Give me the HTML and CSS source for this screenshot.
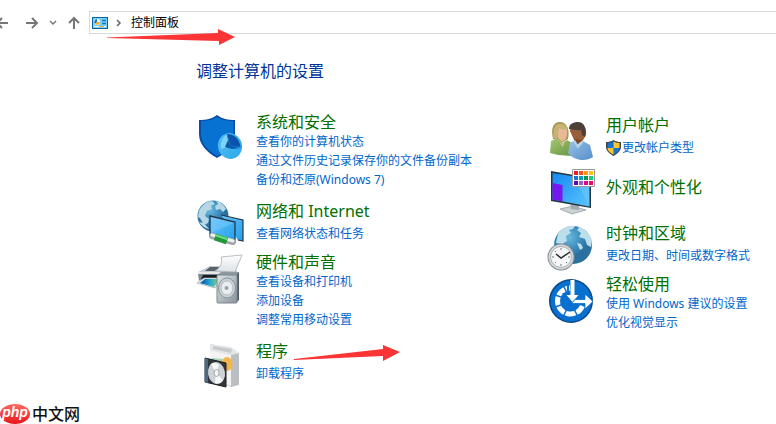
FILE: index.html
```html
<!DOCTYPE html>
<html lang="zh-CN">
<head>
    <meta charset="UTF-8">
    <meta name="viewport" content="width=device-width, initial-scale=1.0">
    <title>控制面板</title>
    <link rel="stylesheet" href="styles.css">
</head>
<body>
    <header class="toolbar">
        <nav class="nav-buttons">
            <button class="nav-btn back" aria-label="后退">
                <svg width="14" height="14" viewBox="0 0 14 14"><path d="M13 7H2M7 2L2 7l5 5"/></svg>
            </button>
            <button class="nav-btn forward" aria-label="前进">
                <svg width="14" height="14" viewBox="0 0 14 14"><path d="M1 7h11M7 2l5 5-5 5"/></svg>
            </button>
            <button class="nav-btn recent" aria-label="最近位置">
                <svg width="8" height="8" viewBox="0 0 8 8"><path d="M1 2l3 3 3-3"/></svg>
            </button>
            <button class="nav-btn up" aria-label="向上">
                <svg width="14" height="14" viewBox="0 0 14 14"><path d="M7 13V2M2 7l5-5 5 5"/></svg>
            </button>
        </nav>
        <div class="address-bar">
            <svg width="16" height="12" viewBox="0 0 16 12">
                <rect width="16" height="12" fill="#0b66a5"/>
                <rect x="1" y="1" width="14" height="10" fill="#79d0fb"/>
                <circle cx="5" cy="5" r="3" fill="#fff"/>
                <path d="M5 5V2a3 3 0 0 0-2 5z" fill="#1475c4"/>
                <path d="M5 5l-2 2a3 3 0 0 0 5-2z" fill="#f6ae24"/>
                <path d="M10 3.500h4M10 6.500h4" stroke="#1475c4" stroke-width="1.500"/>
                <path d="M2 9.500h6M12 9.500h2" stroke="#fff"/>
                <path d="M7 9.500h5" stroke="#f6ae24"/>
            </svg>
            <svg class="crumb-arrow" width="6" height="8" viewBox="0 0 6 8"><path d="M1 1l3 3-3 3"/></svg>
            <a href="#" class="crumb">控制面板</a>
        </div>
    </header>

    <main class="content">
        <h1>调整计算机的设置</h1>
        <div class="columns">
            <div class="column">
                <section class="category tall">
                    <svg class="icon" viewBox="0 0 48 48">
                        <defs>
                            <linearGradient id="pie" x2="1" y2="1"><stop stop-color="#55bdf0"/><stop offset="1" stop-color="#28a8ea"/></linearGradient>
                        </defs>
                        <path d="M21 1c5 4 11 5 18 5v14c0 11-9 19-18 24C12 39 3 31 3 20V6c7 0 13-1 18-5z" fill="#0a4ba5"/>
                        <path d="M21 3c5 3 10 4 16.500 4v13c0 10-8 17-16.500 22C12.500 37 5 30 5 20V7c6 0 11-1 16-4z" fill="#0872d3"/>
                        <ellipse cx="34" cy="32" rx="12" ry="13" transform="rotate(-18 34 32)" fill="url(#pie)"/>
                        <path d="M34 32l-3-12c7 0 12 4 13.500 13z" fill="#0c54aa"/>
                        <path d="M34 32l-9 3c-1-6 1-11 6-15z" fill="#7ed2f7"/>
                        <path d="M31 20l3 12 10.500 1" fill="none" stroke="#1270cb"/>
                        <path d="M29 33l3-7 2 6 10 2-8 1z" fill="#0757ab"/>
                    </svg>
                    <div class="category-text">
                        <h2><a href="#">系统和安全</a></h2>
                        <a href="#">查看你的计算机状态</a>
                        <a href="#">通过文件历史记录保存你的文件备份副本</a>
                        <a href="#">备份和还原(Windows 7)</a>
                    </div>
                </section>

                <section class="category">
                    <svg class="icon" viewBox="0 0 48 48">
                        <defs>
                            <radialGradient id="globe" cx=".4" cy=".3"><stop stop-color="#6ab9df"/><stop offset=".7" stop-color="#3788b9"/><stop offset="1" stop-color="#2b719f"/></radialGradient>
                            <linearGradient id="screen" x2="1" y2="1"><stop stop-color="#69c5ff"/><stop offset="1" stop-color="#239ee9"/></linearGradient>
                        </defs>
                        <circle cx="17" cy="18" r="15.500" fill="url(#globe)"/>
                        <path d="M3 13C6 7 11 3 16 3l3 3-4 2 1 3-5 2-2 5 4 3-1 4-4 2-4-7-2-1zM20 3c5 1 8 4 10 8l-3 3-3-3-4 1-1-4 3-2zM3 24l5 1 5 6c-5-1-8-4-10-7z" fill="#b6d8e6"/>
                        <path d="M25 17l22 5v21l-5-1" fill="url(#screen)" stroke="#263744" stroke-width="1.200"/>
                        <path d="M14 18l25 6v20l-25-7z" fill="url(#screen)" stroke="#263744" stroke-width="1.300"/>
                        <path d="M15 19l23 6-23 10z" fill="#9adcff" opacity=".3"/>
                        <path d="M16 38l21 6" stroke="#9ca4a8" stroke-width="6" stroke-linecap="round"/>
                        <path d="M16 37l21 6" stroke="#edf0ee" stroke-width="3" stroke-linecap="round"/>
                        <path d="M19 39l12 4" stroke="#229739" stroke-width="7"/>
                        <path d="M19 37l12 4" stroke="#6de17d" stroke-width="2"/>
                    </svg>
                    <div class="category-text">
                        <h2><a href="#">网络和 Internet</a></h2>
                        <a href="#">查看网络状态和任务</a>
                    </div>
                </section>

                <section class="category tall">
                    <svg class="icon" viewBox="0 0 48 48">
                        <defs>
                            <linearGradient id="metal" x2="1" y2="1"><stop stop-color="#dfe5e8"/><stop offset="1" stop-color="#87939a"/></linearGradient>
                            <linearGradient id="photo"><stop stop-color="#0646a5"/><stop offset=".5" stop-color="#23abd2"/><stop offset="1" stop-color="#9ed26e"/></linearGradient>
                            <linearGradient id="paper" x2="0" y2="1"><stop stop-color="#fff"/><stop offset="1" stop-color="#dbe1e5"/></linearGradient>
                        </defs>
                        <path d="M2 18l12-6h24l4 7-10 9H3z" fill="#c6cdd2"/>
                        <path d="M14 13h23l-4 4H9z" fill="#596269"/>
                        <path d="M25 3l21-2-7 17-20-1c5-3 8-8 6-14z" fill="url(#paper)" stroke="#a9b0b5" stroke-width=".8"/>
                        <path d="M2 18h29v10l-28-2z" fill="#7b858c"/>
                        <path d="M2 18h29v2H2z" fill="#e3e8eb"/>
                        <path d="M7 21h22l-3 4H5z" fill="#171e22"/>
                        <path d="M8 24h18l-7 10L1 29z" fill="#e7edf0" stroke="#9ca6ac" stroke-width=".7"/>
                        <path d="M9 25h15l-6 8-14-4z" fill="url(#photo)"/>
                        <path d="M21 21l4-3h18l-2 4z" fill="#8e999f"/>
                        <path d="M40 22l3-4v28l-3 3z" fill="#4e595f"/>
                        <rect x="21" y="21" width="20" height="28" rx="1" fill="url(#metal)" stroke="#7d878d"/>
                        <ellipse cx="31" cy="34" rx="8.500" ry="10" fill="#cbd2d6" stroke="#8a9499"/>
                        <ellipse cx="31" cy="34" rx="6" ry="7" fill="#e9edef" stroke="#b4bbbf"/>
                        <circle cx="30.500" cy="34" r="2" fill="#9ba4a9"/>
                    </svg>
                    <div class="category-text">
                        <h2><a href="#">硬件和声音</a></h2>
                        <a href="#">查看设备和打印机</a>
                        <a href="#">添加设备</a>
                        <a href="#">调整常用移动设置</a>
                    </div>
                </section>

                <section class="category">
                    <svg class="icon" viewBox="0 0 48 48">
                        <path d="M14 6l20 4 9 6v31l-8 2-21-9z" fill="#c5c9cb"/>
                        <path d="M14 12l21 5v31l-21-7z" fill="#f2f3f2"/>
                        <path d="M35 17l8-2v31l-8 3z" fill="#bbbfc2"/>
                        <path d="M14 6l21 3 8 6-8 2-21-5z" fill="#e4e7e8"/>
                        <path d="M17 8l19 3-1 4-18-4z" fill="#c6cacc"/>
                        <path d="M16 20l11 1-3 7 5 8-5 8-8-3z" fill="#a8d4b4"/>
                        <ellipse cx="31" cy="26" rx="5.500" ry="7" fill="#f6b44d"/>
                        <path d="M9 20l21 5v24L9 44z" fill="#30363b" stroke="#1c2023"/>
                        <path d="M9 20l3 1v24l-3-1z" fill="#4d6988"/>
                        <ellipse cx="20.500" cy="35" rx="8.500" ry="11" transform="rotate(-10 20.500 35)" fill="#ced3d5"/>
                        <path d="M20 35l-5-9c3-2 6-1 8 1zM20 35l7 7c-2 4-5 4-8 3z" fill="#f8f9f9"/>
                        <ellipse cx="20.500" cy="35" rx="2.500" ry="3.500" fill="#f6f7f7" stroke="#a0a8ad"/>
                    </svg>
                    <div class="category-text">
                        <h2><a href="#">程序</a></h2>
                        <a href="#">卸载程序</a>
                    </div>
                </section>
            </div>

            <div class="column">
                <section class="category">
                    <svg class="icon" viewBox="0 0 48 48">
                        <defs>
                            <linearGradient id="green" x2="1" y2="1"><stop stop-color="#a4c773"/><stop offset="1" stop-color="#66933e"/></linearGradient>
                            <linearGradient id="blue" x2="1" y2="1"><stop stop-color="#9ac1e8"/><stop offset="1" stop-color="#568fc9"/></linearGradient>
                        </defs>
                        <path d="M7 27C5 18 6 10 14 10c7 0 10 8 8 17l-5 3z" fill="#aa9652"/>
                        <path d="M12 15c5-3 10 0 9 6 0 5-2 8-5 8-4 0-6-6-4-14z" fill="#e9b993"/>
                        <path d="M8 17c2-8 12-6 14 0-5 1-7 0-9-1l-2 11-4-1z" fill="#c5b374"/>
                        <path d="M4 41l1-12 7-3 5 5 4-3 8 5-3 11-14-1z" fill="url(#green)"/>
                        <path d="M11 27l5 5 3-4-2 7z" fill="#e9b993"/>
                        <path d="M24 19c0-7 4-8 8-8 5 0 9 4 8 12l-4 7h-7z" fill="#985f3a"/>
                        <path d="M23 17c0-5 4-7 9-7 6 0 9 6 7 15l-3-2-1-5c-5 1-8-1-12-1z" fill="#4d4039"/>
                        <path d="M28 27l3 6 6-5z" fill="#804923"/>
                        <path d="M22 41l2-10 5-3 3 5 5-4 7 4 3 12c-7 5-19 4-25-4z" fill="url(#blue)"/>
                        <path d="M28 29l4 6 5-6" fill="none" stroke="#b5d3ef" stroke-width="2"/>
                    </svg>
                    <div class="category-text">
                        <h2><a href="#">用户帐户</a></h2>
                        <a href="#" class="shield-link">
                            <svg width="15" height="16" viewBox="0 0 15 16">
                                <path d="M7.500 0C10 1.500 12 2 15 2v5c0 4-4 7-7.500 9C4 14 0 11 0 7V2c3 0 5-.5 7.500-2z" fill="#3c464d"/>
                                <path d="M7.500 1.500V8h-6V3c2 0 4-.5 6-1.500zM7.500 8h6c0 3-3 5-6 6.500z" fill="#1675d0"/>
                                <path d="M7.500 1.500V8h6V3c-2 0-4-.5-6-1.500zM7.500 8h-6c0 3 3 5 6 6.500z" fill="#fdc52c"/>
                            </svg>
                            更改帐户类型</a>
                    </div>
                </section>

                <section class="category title-only">
                    <svg class="icon" viewBox="0 0 48 48">
                        <defs>
                            <linearGradient id="desktop" x2="1" y2="1"><stop stop-color="#1489f0"/><stop offset="1" stop-color="#5cc5ff"/></linearGradient>
                        </defs>
                        <path d="M14 43l13-3 13 4-14 4z" fill="#cbd0d3" stroke="#8e969b" stroke-width=".7"/>
                        <path d="M24 36h9v8l-8-1z" fill="#a2aab0"/>
                        <path d="M5 5l40 7v30L5 35z" fill="#253640"/>
                        <path d="M6.500 7L43.500 13v27.500L6.500 33.500z" fill="url(#desktop)"/>
                        <path d="M6.500 17l10 2v16.500l-10-2z" fill="#7717ef"/>
                        <path d="M26 10l17 3v25z" fill="#8ad7ff" opacity=".35"/>
                        <path d="M26.500 3.500h22v17h-22z" fill="#fff" stroke="#9b9b9b"/>
                        <path d="M28 5h4v4h-4z" fill="#f01c23"/><path d="M33 5h4v4h-4z" fill="#ff4b20"/><path d="M38 5h4v4h-4z" fill="#ff970d"/><path d="M43 5h4v4h-4z" fill="#ffc20b"/>
                        <path d="M28 10h4v4h-4z" fill="#1678d1"/><path d="M33 10h4v4h-4z" fill="#0a9cc5"/><path d="M38 10h4v4h-4z" fill="#109447"/><path d="M43 10h4v4h-4z" fill="#20c981"/>
                        <path d="M28 15h4v4h-4z" fill="#5b08c5"/><path d="M33 15h4v4h-4z" fill="#9364ca"/><path d="M38 15h4v4h-4z" fill="#e00686"/><path d="M43 15h4v4h-4z" fill="#f00769"/>
                    </svg>
                    <div class="category-text">
                        <h2><a href="#">外观和个性化</a></h2>
                    </div>
                </section>

                <section class="category">
                    <svg class="icon" viewBox="0 0 48 48">
                        <circle cx="27" cy="25" r="19" fill="url(#globe)"/>
                        <path d="M12 14C16 8 22 5 29 6l-2 3-4 1 2 3-5 3 1 5-5 3-6-1zM31 6c7 2 12 7 15 14l-1 7-4-2-2-6-6-2 2-4-4-3 2-2zM31 23l4 1 2 4-3 2z" fill="#bddfec"/>
                        <circle cx="15" cy="37" r="13.500" fill="#858f95"/>
                        <circle cx="15" cy="37" r="12.500" fill="#d4d9dc"/>
                        <circle cx="15" cy="37" r="10.500" fill="#f5f6f6" stroke="#aab0b3"/>
                        <path d="M15 28v2M15 44v2M6 37h2M22 37h2M9 31l1 1M21 43l-1-1M9 43l1-1" stroke="#6f777b"/>
                        <path d="M10 34l5 4 9-6" fill="none" stroke="#252b30" stroke-width="1.500"/>
                    </svg>
                    <div class="category-text">
                        <h2><a href="#">时钟和区域</a></h2>
                        <a href="#">更改日期、时间或数字格式</a>
                    </div>
                </section>

                <section class="category tall">
                    <svg class="icon" viewBox="0 0 48 48">
                        <circle cx="25" cy="25" r="22" fill="#0b4784"/>
                        <circle cx="25" cy="25" r="20.500" fill="#0870ce"/>
                        <!-- segmented dial, open to the upper right -->
                        <path d="M24 12A13 13 0 1 0 36.500 30" fill="none" stroke="#fff" stroke-width="5"/>
                        <path d="M17 9l4 8M9 19l9 3M9 31l9-3M17 41l4-8M32 41l-4-8" stroke="#0870ce" stroke-width="1.500"/>
                        <path d="M22 8v10h-4l8 10h18" fill="none" stroke="#0870ce" stroke-width="2"/>
                        <path d="M24.500 4h4v15h4l-6 7-6-7h4z" fill="#fff"/>
                        <path d="M29 23.500h10V18l8 7.500-8 7.500v-5.500H25.500z" fill="#fff" stroke="#0870ce" stroke-width=".8"/>
                    </svg>
                    <div class="category-text">
                        <h2><a href="#">轻松使用</a></h2>
                        <a href="#">使用 Windows 建议的设置</a>
                        <a href="#">优化视觉显示</a>
                    </div>
                </section>
            </div>
        </div>
    </main>

    <!-- annotation arrows -->
    <svg class="pointer pointer-address" width="128" height="16" viewBox="0 0 128 16"><path d="M0 8.500L111 4V0l17 8-16 8v-4L0 9z"/></svg>
    <svg class="pointer pointer-programs" width="106" height="16" viewBox="0 0 106 16"><path d="M0 14L89 4V0l17 7-17 9v-5L0 15z"/></svg>

    <div class="watermark">
        <span class="watermark-badge">php</span>
        <span class="watermark-name">中文网</span>
    </div>
</body>
</html>
```
FILE: styles.css
```css
* {
    margin: 0;
    padding: 0;
    box-sizing: border-box;
}

:root {
    --heading-color: #003399;
    --title-color: #007000;
    --link-color: #0066cc;
    --border-color: #d9d9d9;
    --pointer-color: #fb3536;
}

body {
    min-height: 100vh;
    background: white;
    font-family: "Noto Sans", "Noto Sans CJK SC", sans-serif;
    font-size: 12px;
    line-height: 19px;
    overflow: hidden;
}

a {
    color: var(--link-color);
    text-decoration: none;
}

a:hover {
    text-decoration: underline;
}

svg {
    display: block;
    flex-shrink: 0;
}

.toolbar {
    display: flex;
    align-items: center;
    padding-top: 11px;
}

.nav-buttons {
    display: flex;
    align-items: center;
    gap: 10px;
    width: 89px;
}

.nav-btn {
    border: none;
    background: none;
    cursor: pointer;
}

.nav-btn.back {
    margin: 0 6px 0 -5px;
}

.nav-btn path {
    fill: none;
    stroke: #777;
    stroke-width: 2;
}

.nav-btn.recent path {
    stroke-width: 1.5;
}

.address-bar {
    display: flex;
    flex: 1;
    align-items: center;
    height: 23px;
    padding-left: 2px;
    border: 1px solid var(--border-color);
    border-right: none;
}

.crumb-arrow {
    margin: 0 9px 0 8px;
}

.crumb-arrow path {
    fill: none;
    stroke: #666;
    stroke-width: 1.5;
}

.crumb {
    color: #000;
}

.content {
    padding: 27px 0 0 196px;
}

h1 {
    margin-bottom: 31px;
    color: var(--heading-color);
    font-size: 16px;
    font-weight: 400;
    line-height: 20px;
}

.columns {
    display: grid;
    grid-template-columns: 35fr 23fr;
}

.category {
    display: flex;
    align-items: center;
    gap: 12px;
    margin-bottom: 6px;
}

.category.tall {
    align-items: flex-start;
    margin-bottom: 9px;
}

.icon {
    width: 48px;
    height: 48px;
    overflow: visible;
}

.tall .icon {
    margin-top: 2px;
}

.category-text {
    display: flex;
    flex-direction: column;
    align-items: flex-start;
    white-space: nowrap;
}

h2 {
    margin-bottom: 3px;
    font-size: 16px;
    font-weight: 400;
    line-height: 20px;
}

h2 a {
    color: var(--title-color);
}

.tall h2 {
    margin-bottom: 0;
}

.title-only h2 {
    margin-bottom: 6px;
}

.shield-link {
    display: flex;
    align-items: center;
    gap: 1px;
}

.pointer {
    position: absolute;
    fill: var(--pointer-color);
    pointer-events: none;
}

.pointer-address {
    top: 29px;
    left: 107px;
}

.pointer-programs {
    top: 345px;
    left: 294px;
}

.watermark {
    position: absolute;
    bottom: 0;
    left: 0;
    display: flex;
    align-items: center;
    gap: 2px;
}

.watermark-badge {
    width: 30px;
    height: 20px;
    border-radius: 50%;
    background: linear-gradient(#ff6b60, #e6161c);
    color: white;
    font-family: "Liberation Sans", sans-serif;
    font-size: 14px;
    font-style: italic;
    font-weight: 700;
    line-height: 17px;
    text-align: center;
}

.watermark-name {
    color: #111;
    font-size: 16px;
    font-weight: 500;
    line-height: 20px;
}
```
